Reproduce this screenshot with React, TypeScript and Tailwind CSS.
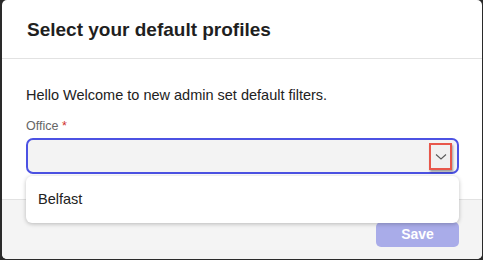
import React from "react";

export default function App() {
  return (
    <div
      className="w-[483px] h-[260px] bg-[#2a2a2a] pl-[2px] pr-[1px] pb-[1px] overflow-hidden"
      style={{ fontFamily: '"Liberation Sans", Arial, sans-serif' }}
    >
      <div className="relative w-full h-full bg-white rounded-[5px] flex flex-col overflow-visible">
        {/* header */}
        <div className="h-[59px] border-b border-[#e2e2e2] pl-[25px] flex items-center shrink-0">
          <h1 className="text-[19px] font-bold text-[#1f1f1f] leading-none pt-[1px]">
            Select your default profiles
          </h1>
        </div>
        {/* body */}
        <div className="flex-1 pl-[24px] pr-[23px] pt-[26px]">
          <p className="text-[14.5px] leading-[20px] text-[#222]">
            Hello Welcome to new admin set default filters.
          </p>
          <div className="mt-[13px] text-[12.5px] leading-[16px] text-[#666]">
            Office <span className="text-[#d0312d]">*</span>
          </div>
          <div className="relative mt-[4px]">
            <div className="h-[36px] rounded-[7px] border-2 border-[#4c52e3] bg-[#f3f3f3] flex items-center justify-end pr-[5px]">
              <div className="w-[23px] h-[27px] mt-[1px] border-2 border-[#e8574b] bg-[#f1f1f1] shadow-[1px_2px_2px_rgba(0,0,0,0.35)] flex items-center justify-center">
                <svg width="12" height="8" viewBox="0 0 12 8" fill="none">
                  <path d="M1 1.5 L6 6 L11 1.5" stroke="#5a5a5a" strokeWidth="1.1" />
                </svg>
              </div>
            </div>
            <div className="absolute left-0 right-0 top-[38px] z-10 h-[47px] bg-white rounded-[6px] shadow-[0_1px_4px_rgba(0,0,0,0.25)] flex items-center pl-[12px]">
              <span className="text-[14.5px] text-[#222] pt-[1px]">Belfast</span>
            </div>
          </div>
        </div>
        {/* footer */}
        <div className="h-[60px] shrink-0 border-t border-[#e2e2e2] bg-[#f4f4f4] rounded-b-[5px] flex justify-end items-start pt-[22px] pr-[23px]">
          <button className="w-[83px] h-[25px] rounded-[5px] bg-[#a9ace9] text-white text-[14px] font-bold flex items-center justify-center">
            Save
          </button>
        </div>
      </div>
    </div>
  );
}
